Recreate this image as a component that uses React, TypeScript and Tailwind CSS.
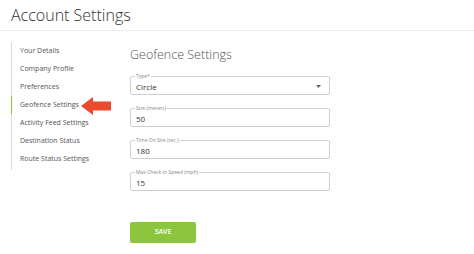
const menu = [
  "Your Details",
  "Company Profile",
  "Preferences",
  "Geofence Settings",
  "Activity Feed Settings",
  "Destination Status",
  "Route Status Settings",
];

function Field({ label, value, select }: { label: string; value: string; select?: boolean }) {
  return (
    <div className="relative h-[19px] w-[200px] rounded-[2px] border border-[#cfcfcf] bg-white">
      <span className="absolute left-[4px] top-[-4px] bg-white px-[1px] text-[5px] leading-[6px] text-[#888]">
        {label}
      </span>
      <div className="flex h-full items-center justify-between pl-[5px] pr-[8px] pt-[2px] text-[8px] text-[#333]">
        <span>{value}</span>
        {select && (
          <svg width="5" height="3" viewBox="0 0 5 3">
            <path d="M0 0h5L2.5 3z" fill="#666" />
          </svg>
        )}
      </div>
    </div>
  );
}

export default function App() {
  return (
    <div
      className="h-[254px] w-[474px] overflow-hidden bg-white"
      style={{ fontFamily: '"Open Sans", "Liberation Sans", sans-serif' }}
    >
      <header className="h-[31px] border-b border-[#ececec] pl-[11px] pt-[4px]">
        <h1 className="text-[16px] font-light leading-[22px] text-[#333]">Account Settings</h1>
      </header>

      <div className="flex pl-[11px] pt-[11px]">
        {/* sidebar */}
        <div className="relative w-[119px]">
          <ul className="w-[80px] border-l border-[#dcdcdc] pb-[2px]">
            {menu.map((m) => (
              <li
                key={m}
                className={
                  "h-[18px] whitespace-nowrap pl-[8px] text-[7px] leading-[18px] text-[#555] " +
                  (m === "Geofence Settings" ? "-ml-px border-l border-[#8cc63f]" : "")
                }
              >
                {m}
              </li>
            ))}
          </ul>
          <svg
            className="absolute left-[70px] top-[55px]"
            width="30"
            height="18"
            viewBox="0 0 30 18"
          >
            <path d="M0 9L12 0v4.5h18v9H12V18z" fill="#ea4a2e" />
          </svg>
        </div>

        {/* content */}
        <div className="flex flex-col">
          <h2 className="mt-[5px] text-[12.5px] font-light leading-[16px] text-[#555]">Geofence Settings</h2>
          <div className="mt-[13px] flex flex-col gap-[13px]">
            <Field label="Type*" value="Circle" select />
            <Field label="Size (meters)" value="50" />
            <Field label="Time On Site (sec.)" value="180" />
            <Field label="Max Check-in Speed (mph)" value="15" />
          </div>
          <button className="mt-[31px] h-[21px] w-[66px] rounded-[2px] bg-[#8cc63f] text-[7px] font-semibold text-white">
            SAVE
          </button>
        </div>
      </div>
    </div>
  );
}
